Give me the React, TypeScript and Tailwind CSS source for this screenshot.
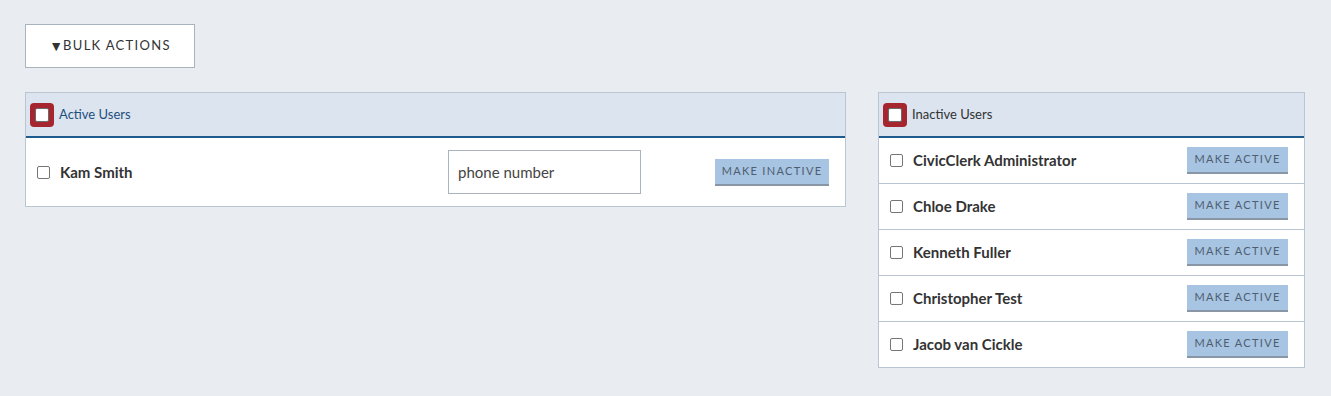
import React from 'react';

const font = { fontFamily: 'Lato, "Open Sans", sans-serif' };

function HeaderCheck() {
    return (
        <div className="w-[24px] h-[24px] rounded-[4px] bg-[#a5262f] flex items-center justify-center shrink-0">
            <div className="w-[14px] h-[14px] bg-white rounded-[2px] border border-[#6b6b6b]" />
        </div>
    );
}

function RowCheck() {
    return <div className="w-[13px] h-[13px] bg-white rounded-[2px] border border-[#767676] shrink-0" />;
}

function ActionButton({ label, width }: { label: string; width: string }) {
    return (
        <button
            className={`${width} h-[27px] bg-[#a7c4e3] border-b-2 border-[#8896a6] text-[11px] tracking-[0.12em] text-[#4f5e6e] uppercase flex items-center justify-center`}
        >
            {label}
        </button>
    );
}

const inactive = ['CivicClerk Administrator', 'Chloe Drake', 'Kenneth Fuller', 'Christopher Test', 'Jacob van Cickle'];

export default function App() {
    return (
        <div className="min-h-[396px] w-full bg-[#e9edf1] px-[25px] pt-[24px]" style={font}>
            {/* Bulk actions */}
            <button className="w-[170px] h-[44px] bg-white border border-[#a9b3bd] text-[13px] tracking-[0.1em] text-[#333] flex items-center justify-center">
                <span className="text-[14px] tracking-normal leading-none">▼</span>BULK ACTIONS
            </button>

            <div className="flex items-start gap-[32px] mt-[24px]">
                {/* Active Users */}
                <div className="w-[821px] border border-[#b9c5d3] bg-white">
                    <div className="h-[45px] bg-[#dbe4ef] border-b-2 border-[#1f5a8f] flex items-center pl-[4px] gap-[5px]">
                        <HeaderCheck />
                        <span className="text-[13px] text-[#1f4f7e]">Active Users</span>
                    </div>
                    <div className="h-[68px] flex items-center pl-[11px] pr-[16px]">
                        <RowCheck />
                        <span className="ml-[10px] text-[15px] font-bold text-[#333] w-[388px]">Kam Smith</span>
                        <div className="w-[193px] h-[44px] border border-[#a9b3bd] flex items-center px-[9px] text-[15px] text-[#444]">
                            phone number
                        </div>
                        <div className="ml-auto">
                            <ActionButton label="Make Inactive" width="w-[114px]" />
                        </div>
                    </div>
                </div>

                {/* Inactive Users */}
                <div className="w-[427px] border border-[#b9c5d3] bg-white">
                    <div className="h-[45px] bg-[#dbe4ef] border-b-2 border-[#1f5a8f] flex items-center pl-[4px] gap-[5px]">
                        <HeaderCheck />
                        <span className="text-[13px] text-[#333]">Inactive Users</span>
                    </div>
                    {inactive.map((name, i) => (
                        <div
                            key={name}
                            className={`flex items-center pl-[11px] pr-[16px] ${i < inactive.length - 1 ? 'h-[46px] border-b border-[#b9c5d3]' : 'h-[45px]'}`}
                        >
                            <RowCheck />
                            <span className="ml-[10px] text-[15px] font-bold text-[#333]">{name}</span>
                            <div className="ml-auto">
                                <ActionButton label="Make Active" width="w-[101px]" />
                            </div>
                        </div>
                    ))}
                </div>
            </div>
        </div>
    );
}
